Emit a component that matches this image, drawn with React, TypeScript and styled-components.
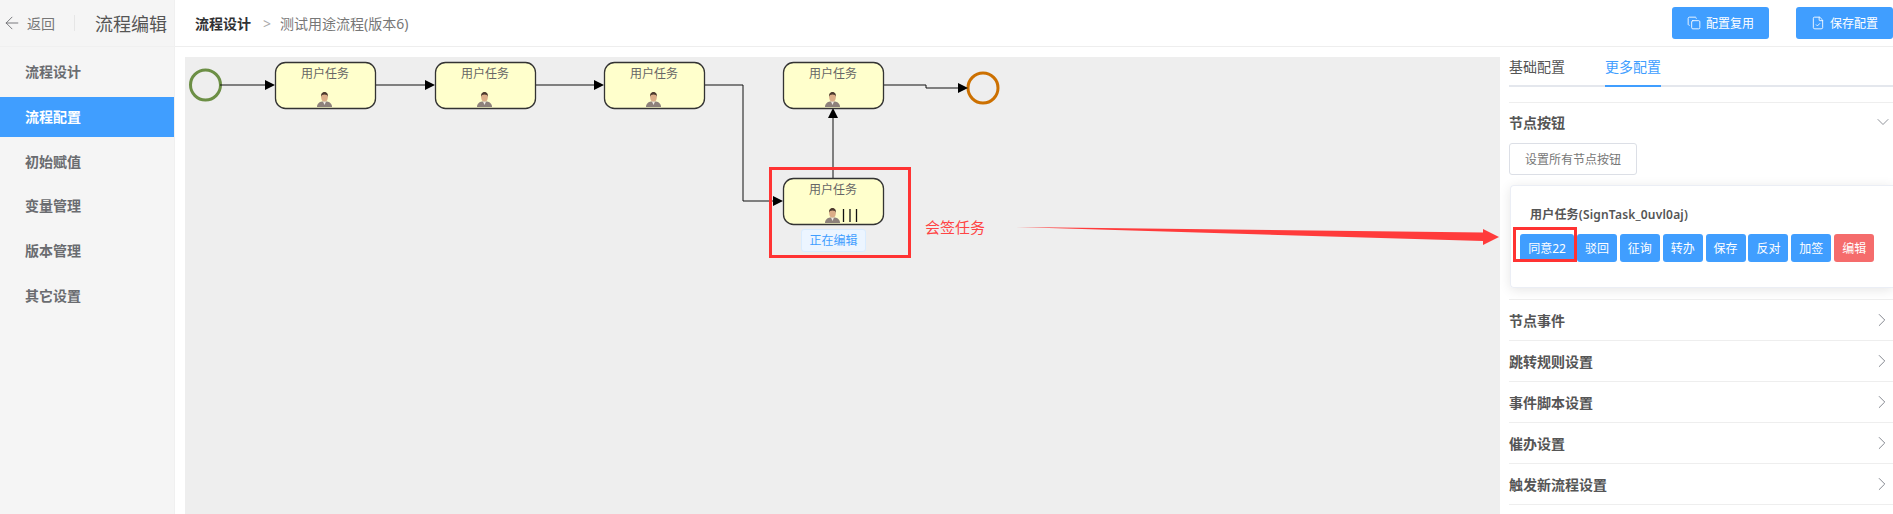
import React from 'react'
import styled, { createGlobalStyle } from 'styled-components'
import { ArrowLeft, ChevronDown, ChevronRight, Copy, FileCheck } from 'lucide-react'

const uiFont = '"Noto Sans", "Noto Sans CJK SC", sans-serif'

const GlobalStyle = createGlobalStyle`
  html, body {
    margin: 0;
    height: 100%;
    background: #fff;
    overflow: hidden;
    font-family: ${uiFont};
  }
  #root { height: 100%; }
  *, *::after { box-sizing: border-box; }
`

const tasks = [
  { x: 275, y: 62 },
  { x: 435, y: 62 },
  { x: 604, y: 62 },
  { x: 783, y: 62 },
  { x: 783, y: 178, multi: true },
]

const edges = [
  { d: 'M220 85H266', tip: '275,85 265,80 265,90' },
  { d: 'M376 85H426', tip: '435,85 425,80 425,90' },
  { d: 'M536 85H595', tip: '604,85 594,80 594,90' },
  { d: 'M704 85H743V201H774', tip: '783,201 773,196 773,206' },
  { d: 'M833 178V117', tip: '833,108 828,118 838,118' },
  { d: 'M883 85H926V88H959', tip: '968,88 958,83 958,93' },
]

const sideItems = ['流程设计', '流程配置', '初始赋值', '变量管理', '版本管理', '其它设置']
const nodeButtons = ['驳回', '征询', '转办', '保存', '反对', '加签']
const closedRows = ['节点事件', '跳转规则设置', '事件脚本设置', '催办设置', '触发新流程设置']

function UserIcon({ x, y }: { x: number; y: number }) {
  return (
    <g transform={`translate(${x} ${y})`}>
      <path d="M0 15c0-3.600 2.400-5 5-5.600h5c2.600.6 5 2 5 5.600z" fill="#8d817b" />
      <path d="M6 9.400 7.500 13 9 9.400z" fill="#f1ece6" />
      <ellipse cx="7.500" cy="5.200" rx="3.300" ry="4.200" fill="#dcae88" />
      <path d="M4.100 5C3.700 1.400 5.500 0 7.500 0s3.800 1.400 3.400 5c-.4-1.600-1.300-2.400-3.400-2.400S4.500 3.400 4.100 5z" fill="#4d3a2e" />
    </g>
  )
}

function Diagram() {
  return (
    <Flow viewBox="185 57 1315 457">
      <circle cx="205.500" cy="85" r="15" fill="none" stroke="#6c8f45" strokeWidth="3" />
      <circle cx="983" cy="88" r="15" fill="none" stroke="#cc7000" strokeWidth="3" />

      {edges.map((edge) => (
        <g key={edge.d}>
          <path d={edge.d} fill="none" stroke="#111" strokeWidth="1" />
          <polygon points={edge.tip} fill="#000" />
        </g>
      ))}

      {tasks.map((task) => (
        <g key={`${task.x}-${task.y}`}>
          <rect x={task.x + 0.5} y={task.y + 0.5} width="100" height="46" rx="10" fill="#ffffcc" stroke="#333" strokeWidth="1.300" />
          <TaskLabel x={task.x + 50} y={task.y + 13}>用户任务</TaskLabel>
          <UserIcon x={task.x + 42} y={task.y + 30} />
          {task.multi && (
            <path d={`M${task.x + 60.500} ${task.y + 31}v13M${task.x + 67} ${task.y + 31}v13M${task.x + 73.500} ${task.y + 31}v13`} stroke="#111" strokeWidth="1.300" />
          )}
        </g>
      ))}

      <rect x="770.500" y="168.500" width="139" height="88" fill="none" stroke="#ff3333" strokeWidth="3" />
      <polygon points="1014,227 1483,232.500 1483,229 1499,237 1483,245 1483,241" fill="#ff3b3b" />
    </Flow>
  )
}

export default function App() {
  return (
    <>
      <GlobalStyle />
      <S.App>
        <S.Side>
          <S.SideHead>
            <ArrowLeft size={20} strokeWidth={1} color="#606266" />
            <S.Back>返回</S.Back>
            <S.Divider />
            <S.SideTitle>流程编辑</S.SideTitle>
          </S.SideHead>
          <S.Nav>
            {sideItems.map((item) => (
              <S.NavItem key={item} $active={item === '流程配置'}>{item}</S.NavItem>
            ))}
          </S.Nav>
        </S.Side>

        <S.Main>
          <S.TopBar>
            <S.CrumbStrong>流程设计</S.CrumbStrong>
            <S.CrumbSep>&gt;</S.CrumbSep>
            <S.Crumb>测试用途流程(版本6)</S.Crumb>
            <S.TopActions>
              <S.TopButton><Copy size={14} strokeWidth={1.500} />配置复用</S.TopButton>
              <S.TopButton><FileCheck size={14} strokeWidth={1.500} />保存配置</S.TopButton>
            </S.TopActions>
          </S.TopBar>

          <S.Body>
            <S.Canvas>
              <Diagram />
              <S.Editing>正在编辑</S.Editing>
              <S.Note>会签任务</S.Note>
            </S.Canvas>

            <S.Panel>
              <S.Tabs>
                <S.Tab>基础配置</S.Tab>
                <S.Tab $active>更多配置</S.Tab>
              </S.Tabs>

              <S.RowHead $open>
                节点按钮
                <ChevronDown size={20} strokeWidth={1} color="#7a7d85" />
              </S.RowHead>
              <S.GhostButton>设置所有节点按钮</S.GhostButton>
              <S.Card>
                <S.CardTitle>用户任务(SignTask_0uvl0aj)</S.CardTitle>
                <S.ButtonRow>
                  <S.NodeButton $wide $marked>同意22</S.NodeButton>
                  {nodeButtons.map((label) => (
                    <S.NodeButton key={label}>{label}</S.NodeButton>
                  ))}
                  <S.NodeButton $danger>编辑</S.NodeButton>
                </S.ButtonRow>
              </S.Card>

              <S.Rows>
                {closedRows.map((row) => (
                  <S.RowHead key={row}>
                    {row}
                    <ChevronRight size={22} strokeWidth={1} color="#7a7d85" />
                  </S.RowHead>
                ))}
              </S.Rows>
            </S.Panel>
          </S.Body>
        </S.Main>
      </S.App>
    </>
  )
}

const Flow = styled.svg`
  display: block;
  width: 1315px;
  height: 457px;
  overflow: visible;
`

const TaskLabel = styled.text`
  font-size: 12px;
  fill: #666;
  text-anchor: middle;
  dominant-baseline: middle;
`

const S = {
  App: styled.div`
    display: flex;
    width: 100%;
    height: 100%;
    color: #303133;
`,

  Side: styled.aside`
    flex: 0 0 175px;
    background: #f5f5f5;
    border-right: 1px solid #f0f0f0;
`,

  SideHead: styled.div`
    display: flex;
    align-items: center;
    height: 47px;
    padding-left: 2px;
    border-bottom: 1px solid #f0f0f0;
`,

  Back: styled.span`
    margin-left: 5px;
    font-size: 14px;
    color: #777;
`,

  Divider: styled.i`
    width: 1px;
    height: 16px;
    margin: 0 20px 0 19px;
    background: #e6e6e6;
`,

  SideTitle: styled.span`
    font-size: 18px;
    color: #555;
`,

  Nav: styled.nav`
    display: flex;
    flex-direction: column;
    gap: 4.800px;
    padding-top: 5px;
`,

  NavItem: styled.div<{ $active?: boolean }>`
    height: 40px;
    padding-left: 25px;
    line-height: 40px;
    font-size: 14px;
    font-weight: 700;
    color: ${(p) => (p.$active ? '#fff' : '#6a6c70')};
    background: ${(p) => (p.$active ? '#409eff' : 'transparent')};
`,

  Main: styled.main`
    flex: 1;
    display: flex;
    flex-direction: column;
    min-width: 0;
`,

  TopBar: styled.header`
    display: flex;
    align-items: center;
    flex: 0 0 47px;
    padding-left: 20px;
    border-bottom: 1px solid #eeeeee;
    font-size: 14px;
`,

  CrumbStrong: styled.span`
    font-weight: 700;
    color: #303133;
`,

  CrumbSep: styled.span`
    margin: 0 9px 0 12px;
    color: #aaa;
`,

  Crumb: styled.span`
    color: #777;
`,

  TopActions: styled.div`
    display: flex;
    gap: 27px;
    margin-left: auto;
`,

  TopButton: styled.button`
    display: flex;
    align-items: center;
    justify-content: center;
    gap: 5px;
    width: 97px;
    height: 32px;
    padding: 0;
    border: 0;
    border-radius: 3px;
    background: #409eff;
    color: #fff;
    font: 12px ${uiFont};
`,

  Body: styled.div`
    flex: 1;
    display: flex;
    min-height: 0;
`,

  Canvas: styled.section`
    position: relative;
    flex: 1;
    margin: 10px 0 0 10px;
    background: #eeeeee;
    overflow: hidden;
`,

  Editing: styled.span`
    position: absolute;
    left: 616px;
    top: 172px;
    width: 65px;
    height: 23px;
    border: 1px solid #d9ecff;
    border-radius: 3px;
    background: #ecf5ff;
    color: #409eff;
    font-size: 12px;
    line-height: 22px;
    text-align: center;
`,

  Note: styled.span`
    position: absolute;
    left: 740px;
    top: 160px;
    font-size: 15px;
    line-height: 20px;
    color: #ff4444;
`,

  Panel: styled.aside`
    flex: 0 0 393px;
    padding-left: 9px;
    font-size: 14px;
`,

  Tabs: styled.div`
    display: flex;
    gap: 40px;
    height: 40px;
    margin-bottom: 15px;
    border-bottom: 2px solid #e4e7ed;
`,

  Tab: styled.div<{ $active?: boolean }>`
    height: 40px;
    line-height: 39px;
    color: ${(p) => (p.$active ? '#409eff' : '#555')};
    border-bottom: 2px solid ${(p) => (p.$active ? '#409eff' : 'transparent')};
`,

  RowHead: styled.div<{ $open?: boolean }>`
    display: flex;
    align-items: center;
    justify-content: space-between;
    height: 41px;
    padding-bottom: ${(p) => (p.$open ? '2px' : '0')};
    font-weight: 700;
    font-size: 14px;
    color: #555;
    border-top: ${(p) => (p.$open ? '1px solid #eeeeee' : '0')};
    border-bottom: ${(p) => (p.$open ? '0' : '1px solid #eeeeee')};
`,

  GhostButton: styled.button`
    display: block;
    width: 128px;
    height: 32px;
    padding: 0;
    border: 1px solid #dcdfe6;
    border-radius: 3px;
    background: #fff;
    color: #777;
    font: 12px ${uiFont};
`,

  Card: styled.div`
    height: 103px;
    margin: 10px 0 0 1px;
    padding: 20px 0 0 9px;
    border: 1px solid #ebeef5;
    border-right: 0;
    border-radius: 4px 0 0 4px;
    box-shadow: 0 2px 12px rgba(0, 0, 0, 0.1);
`,

  CardTitle: styled.div`
    height: 28px;
    padding-left: 10px;
    font-size: 12px;
    line-height: 17px;
    font-weight: 600;
    letter-spacing: 0.2px;
    color: #555;
`,

  ButtonRow: styled.div`
    display: flex;
    gap: 2.900px;
`,

  NodeButton: styled.button<{ $wide?: boolean; $marked?: boolean; $danger?: boolean }>`
    position: relative;
    width: ${(p) => (p.$wide ? '54px' : '40px')};
    height: 28px;
    padding: 0;
    border: 0;
    border-radius: 3px;
    background: ${(p) => (p.$danger ? '#f56c6c' : '#409eff')};
    color: #fff;
    font: 12px ${uiFont};

    ${(p) => p.$marked && `
      &::after {
        content: '';
        position: absolute;
        left: -7px;
        top: -7px;
        width: 64px;
        height: 35px;
        border: 3px solid #ff3333;
      }
    `}
`,

  Rows: styled.div`
    margin-top: 11px;
    border-top: 1px solid #eeeeee;
`,
}
